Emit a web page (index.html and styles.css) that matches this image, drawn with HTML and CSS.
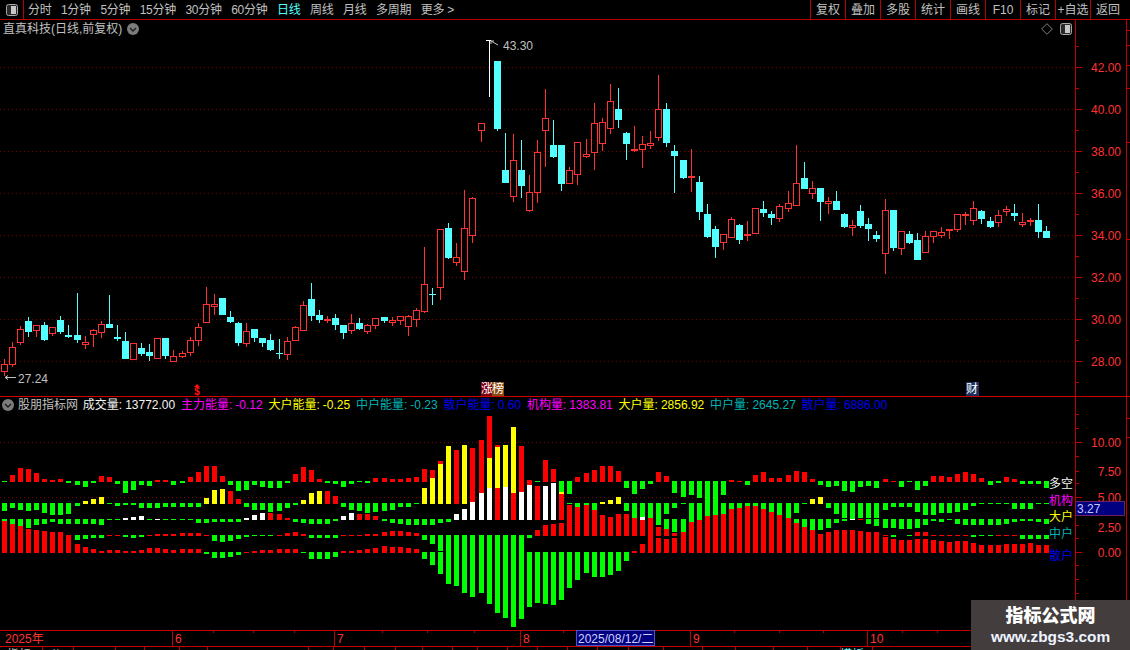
FILE: index.html
```html
<!DOCTYPE html>
<html lang="zh">
<head>
<meta charset="utf-8">
<title>直真科技 日线</title>
<link rel="stylesheet" href="styles.css">
</head>
<body>
<div class="app">
  <header class="toolbar">
    <div class="tb-toggle">
      <svg class="panel-icon" viewBox="0 0 12 12"><rect x=".5" y=".5" width="11" height="11" rx="2" class="pi-box"/><rect x="5" y="2" width="5" height="8" class="pi-bar"/></svg>
    </div>
    <nav class="periods">
      <span>分时</span><span>1分钟</span><span>5分钟</span><span>15分钟</span><span>30分钟</span><span>60分钟</span>
      <span class="active">日线</span><span>周线</span><span>月线</span><span>多周期</span><span>更多 &gt;</span>
    </nav>
    <nav class="tools">
      <span>复权</span><span>叠加</span><span>多股</span><span>统计</span><span>画线</span><span>F10</span><span>标记</span><span>+自选</span><span>返回</span>
    </nav>
  </header>

  <section class="row row-up">
    <div class="pane">
      <svg id="candles" class="chart" viewBox="0 20 1075 376"></svg>
      <div class="pane-title">
        <span>直真科技(日线,前复权)</span>
        <svg class="chev" viewBox="0 0 12 12"><circle cx="6" cy="6" r="6" class="chev-bg"/><path d="M3 5l3 3 3-3" class="chev-line"/></svg>
      </div>
      <div class="pane-icons">
        <svg class="diamond" viewBox="0 0 12 12"><path d="M6 .7L11.3 6 6 11.3.7 6z"/></svg>
        <svg class="panel-icon" viewBox="0 0 12 12"><rect x=".5" y=".5" width="11" height="11" rx="2" class="pi-box"/><rect x="5" y="2" width="5" height="8" class="pi-bar"/></svg>
      </div>
      <span class="flag flag-zt"><i>涨</i><i>榜</i></span>
      <span class="flag flag-cai">财</span>
    </div>
    <svg id="axisUp" class="axis" viewBox="1075 20 51 376"></svg>
    <svg id="stripUp" class="strip" viewBox="1126 20 4 376"></svg>
  </section>

  <section class="row row-low">
    <div class="pane">
      <svg id="bars" class="chart" viewBox="0 397 1075 233"></svg>
      <div class="ind-head">
        <svg class="chev" viewBox="0 0 12 12"><circle cx="6" cy="6" r="6" class="chev-bg"/><path d="M3 5l3 3 3-3" class="chev-line"/></svg>
        <span class="ind-name">股朋指标网</span>
        <span class="c-white">成交量:<b>13772.00</b></span>
        <span class="c-mag">主力能量:<b>-0.12</b></span>
        <span class="c-yel">大户能量:<b>-0.25</b></span>
        <span class="c-teal">中户能量:<b>-0.23</b></span>
        <span class="c-blue">散户能量:<b>0.60</b></span>
        <span class="c-mag">机构量:<b>1383.81</b></span>
        <span class="c-yel">大户量:<b>2856.92</b></span>
        <span class="c-teal">中户量:<b>2645.27</b></span>
        <span class="c-blue">散户量:<b>6886.00</b></span>
      </div>
      <div class="legend">
        <span class="c-white">多空</span>
        <span class="c-mag">机构</span>
        <span class="c-yel">大户</span>
        <span class="c-teal">中户</span>
        <span class="c-blue">散户</span>
      </div>
    </div>
    <div class="axis-wrap">
      <svg id="axisLow" class="axis" viewBox="1075 397 51 233"></svg>
      <span class="cursor-val">3.27</span>
    </div>
    <svg id="stripLow" class="strip" viewBox="1126 397 4 233"></svg>
  </section>

  <svg id="dates" class="dates" viewBox="0 630 1130 20"></svg>

  <aside class="watermark">
    <strong>指标公式网</strong>
    <span>www.zbgs3.com</span>
  </aside>
</div>
<script src="chart.js"></script>
</body>
</html>
```

FILE: styles.css
```css
* { box-sizing: border-box; }
html, body { margin: 0; padding: 0; background: #000; }
body {
  font: 12px/14px "Liberation Sans", "Noto Sans CJK SC", sans-serif;
  color: #c0c0c0;
}
.app { position: relative; width: 1130px; height: 650px; overflow: hidden; background: #000; display: flex; flex-direction: column; }

.toolbar { flex: 0 0 20px; height: 20px; display: flex; align-items: stretch; border-bottom: 1px solid #b80000; }
.tb-toggle { width: 24px; border-right: 1px solid #b80000; display: flex; align-items: center; justify-content: center; }
.panel-icon { width: 12px; height: 12px; display: block; }
.pi-box { fill: #2a2a2a; stroke: #a8a8a8; }
.pi-bar { fill: #c8c8c8; }
.periods { display: flex; gap: 9.6px; padding: 1px 0 0 4px; align-items: center; letter-spacing: -.3px; }
.periods .active { color: #54ffff; }
.tools { margin-left: auto; width: 320px; display: flex; }
.tools span { flex: 0 0 35px; height: 19px; border-left: 1px solid #b80000; text-align: center; padding-top: 3px; }
.tools span:last-child { flex: 1 1 auto; padding-right: 5px; }

.row { display: flex; border-bottom: 1px solid #d00000; min-height: 0; overflow: hidden; }
.row-up { flex: 0 0 377px; }
.row-low { flex: 0 0 233px; border-bottom: 0; }
.pane { position: relative; width: 1075px; overflow: hidden; }
.chart { display: block; width: 1075px; height: 100%; }
.axis { display: block; width: 51px; height: 100%; }
.axis-wrap { position: relative; width: 51px; }
.strip { display: block; flex: 0 0 4px; width: 4px; }
.row-up .strip { height: 376px; }
.row-low .strip { height: 233px; }

.pane-title { position: absolute; left: 3px; top: 2px; display: flex; align-items: center; gap: 5px; }
.chev { width: 12px; height: 12px; display: block; flex: none; }
.chev-bg { fill: #7c7c7c; }
.chev-line { fill: none; stroke: #1c1c1c; stroke-width: 1.4; }
.pane-icons { position: absolute; right: 3px; top: 3px; display: flex; gap: 7px; align-items: center; }
.diamond { width: 12px; height: 12px; display: block; }
.diamond path { fill: none; stroke: #808080; }

.flag { position: absolute; top: 362px; height: 14px; color: #fff; line-height: 14px; display: flex; }
.flag i { font-style: normal; width: 11px; overflow: hidden; }
.flag-zt { left: 481px; }
.flag-zt i:first-child { background: #7a0010; }
.flag-zt i:last-child { background: #8a4a10; width: 12px; }
.flag-cai { left: 966px; width: 13px; background: #1d2f5e; }

.ind-head { position: absolute; left: 2px; top: 1px; display: flex; align-items: center; gap: 5.8px; white-space: nowrap; }
.ind-head b { font-weight: 400; margin-left: 3px; }
.ind-name { margin-left: -1.8px; margin-right: -1px; }
.c-white { color: #f4f4f4; }
.c-mag { color: #ff00ff; }
.c-yel { color: #ffff00; }
.c-teal { color: #00b4b4; }
.c-blue { color: #0000ee; }

.legend { position: absolute; left: 1049px; top: 80px; width: 26px; display: flex; flex-direction: column; gap: 2.5px; white-space: nowrap; }
.legend span:last-child { margin-top: 6px; }

.cursor-val { position: absolute; left: 1px; top: 104px; width: 49px; height: 15px; line-height: 14px; background: #000080; border: 1px solid #70205a; border-left: 0; color: #c8c8ff; padding-left: 1px; }

.dates { display: block; flex: 0 0 20px; width: 1130px; height: 20px; }

.watermark { position: absolute; left: 971px; top: 600px; width: 159px; height: 50px; background: #433e3d; display: flex; flex-direction: column; align-items: center; color: #fff; padding-top: 4px; font-weight: 700; }
.watermark strong { font-size: 18px; line-height: 24px; }
.watermark span { font-size: 15.4px; line-height: 18px; color: #eef4ff; }

/* chart drawing */
.grid { stroke: #7a0000; stroke-width: 1; stroke-dasharray: 1 3; }
.tick { stroke: #c00000; stroke-width: 1; }
.axis-label { fill: #ff3232; font-size: 12px; text-anchor: end; }
.wick-up { stroke: #ff3232; }
.wick-dn { stroke: #54ffff; }
.wick-top { stroke: #ffffff; }
.body-up { fill: #000; stroke: #ff3232; }
.body-flat { fill: #ff3232; }
.body-dn { fill: #54ffff; }
.marker { fill: #c0c0c0; font-size: 12px; }
.marker-line { stroke: #c0c0c0; fill: none; }
.signal { fill: #ff1010; font-size: 10px; font-weight: 700; text-anchor: middle; }
.signal-arrow { fill: #ff1010; }
.bar-r { fill: #ff0000; }
.bar-g { fill: #00ff00; }
.bar-y { fill: #ffff00; }
.bar-w { fill: #ffffff; }
.date-line { stroke: #c00000; stroke-width: 1; }
.date-label { fill: #ff3232; font-size: 12px; }
.date-box { fill: #000080; stroke: #5050c0; }
.date-cur { fill: #d0d0ff; font-size: 12px; }
.tab-text { fill: #c0c0c0; font-size: 12px; }
.tab-text-on { fill: #54ffff; font-size: 12px; }
```

FILE: chart.js
```js
var NS = 'http://www.w3.org/2000/svg';
function el(parent, tag, cls, attrs, text) {
  var n = document.createElementNS(NS, tag);
  if (cls) n.setAttribute('class', cls);
  for (var k in attrs) n.setAttribute(k, attrs[k]);
  if (text != null) n.textContent = text;
  parent.appendChild(n);
  return n;
}
function line(p, cls, x1, y1, x2, y2) { return el(p, 'line', cls, { x1: x1, y1: y1, x2: x2, y2: y2 }); }
function colX(i) { return Math.floor(4.3 + 8.08 * i); }

/* hi, bodyTop, bodyBottom, lo, 1=up 0=down 2=bare wick */
var K = [
[359,364,372,376,1],[342,347,365,367,1],[326,329,343,345,1],[317,321,332,337,0],[325,325,331,337,1],
[322,325,340,341,0],[327,327,334,336,1],[316,320,332,334,0],[325,335,337,338,0],[293,335,340,343,0],
[336,342,345,349,1],[329,330,335,347,1],[321,324,333,338,1],[295,324,328,328,0],[325,337,339,341,0],
[332,341,359,359,0],[343,343,360,360,1],[343,348,354,356,0],[344,352,356,361,0],[338,338,359,359,1],
[338,338,356,359,0],[350,356,362,362,1],[351,353,357,358,1],[337,340,353,356,1],[323,327,341,346,1],
[287,304,323,323,1],[294,304,307,315,1],[298,298,315,315,0],[311,317,322,323,0],[322,323,343,346,0],
[323,331,344,347,1],[329,329,338,342,0],[338,338,343,347,0],[334,340,350,351,0],[339,353,354,359,0],
[337,341,355,360,1],[326,327,341,341,1],[301,305,331,331,1],[283,299,316,321,0],[310,315,320,323,0],
[316,319,321,323,1],[314,318,325,330,0],[325,325,333,339,0],[314,323,331,334,1],[318,323,329,330,0],
[324,325,332,334,1],[318,318,326,329,1],[317,317,321,323,0],[317,320,323,326,1],[316,316,321,325,1],
[315,316,327,336,1],[308,310,320,327,1],[247,284,312,313,1],[288,294,295,305,0],[229,229,288,300,1],
[223,228,258,259,0],[243,257,263,266,1],[190,228,272,280,1],[197,198,236,243,1],[123,123,131,142,1],
[40,40,97,97,2],[61,61,129,131,0],[133,170,183,183,0],[134,160,197,202,1],[140,170,186,198,0],
[175,192,211,212,1],[140,152,193,203,1],[89,118,131,167,1],[120,145,157,158,0],[145,145,184,191,0],
[167,170,184,184,1],[142,142,175,185,1],[139,154,157,158,1],[103,123,153,170,1],[118,122,144,151,1],
[84,101,129,134,1],[88,109,120,128,0],[132,133,144,160,0],[126,149,151,152,1],[136,144,150,168,1],
[131,143,146,149,1],[75,109,138,141,1],[103,109,143,147,0],[145,151,156,193,0],[160,160,178,179,0],
[149,176,178,192,1],[176,182,212,220,0],[204,214,237,238,0],[226,229,247,258,0],[234,234,243,250,1],
[217,219,238,238,1],[224,225,240,244,0],[221,234,236,241,1],[208,208,234,234,1],[201,209,213,217,0],
[211,214,218,225,0],[204,206,219,222,1],[191,203,209,212,1],[145,183,206,206,1],[162,178,189,189,0],
[181,188,194,199,1],[188,188,202,221,0],[197,201,204,214,1],[191,201,210,210,0],[213,214,227,228,0],
[220,225,228,236,1],[205,211,226,228,0],[218,224,229,241,0],[231,235,239,242,0],[199,210,254,274,1],
[210,210,248,251,0],[231,231,249,255,1],[231,234,243,244,0],[233,240,260,260,0],[231,236,253,253,1],
[231,231,237,243,1],[227,232,236,238,1],[229,229,231,239,1],[214,214,230,232,1],[212,214,216,225,1],
[201,208,221,225,1],[210,211,219,224,0],[217,221,227,228,0],[210,215,223,227,1],[206,209,212,216,1],
[204,213,216,221,0],[213,222,225,227,1],[218,220,222,226,1],[204,220,232,238,0],[226,231,238,238,0]
];

var up = document.getElementById('candles');
[67,109,151,193,235,277,319,361].forEach(function (y) { line(up, 'grid', 0, y + .5, 1075, y + .5); });
K.forEach(function (k, i) {
  var x = colX(i), cx = x + .5, kind = k[4];
  if (kind === 2) { line(up, 'wick-top', cx, k[0], cx, k[3]); return; }
  var w = kind ? 'wick-up' : 'wick-dn';
  if (k[1] > k[0]) line(up, w, cx, k[0], cx, k[1]);
  if (k[3] > k[2]) line(up, w, cx, k[2], cx, k[3]);
  if (kind === 0) el(up, 'rect', 'body-dn', { x: x - 3, y: k[1], width: 7, height: k[2] - k[1] });
  else if (k[2] - k[1] <= 2) el(up, 'rect', 'body-flat', { x: x - 3, y: k[1], width: 7, height: 2 });
  else el(up, 'rect', 'body-up', { x: x - 2.5, y: k[1] + .5, width: 6, height: k[2] - k[1] - 1 });
});
/* high / low price markers */
line(up, 'wick-top', 486, 40.5, 491, 40.5);
el(up, 'path', 'marker-line', { d: 'M491 41l7 4M491 41l3 0M491 41l0 3' });
el(up, 'text', 'marker', { x: 503, y: 50 }, '43.30');
el(up, 'path', 'marker-line', { d: 'M5 377.5h11M5 377.5l3-2M5 377.5l3 2' });
el(up, 'text', 'marker', { x: 18, y: 383 }, '27.24');
/* signal */
el(up, 'path', 'signal-arrow', { d: 'M197 384l-3 3h6z' });
el(up, 'text', 'signal', { x: 197, y: 395 }, '$');

var axU = document.getElementById('axisUp');
[[67,'42.00'],[109,'40.00'],[151,'38.00'],[193,'36.00'],[235,'34.00'],[277,'32.00'],[319,'30.00'],[361,'28.00']].forEach(function (t) {
  line(axU, 'tick', 1075, t[0] + .5, 1082, t[0] + .5);
  line(axU, 'tick', 1075, t[0] + 21.5, 1079, t[0] + 21.5);
  el(axU, 'text', 'axis-label', { x: 1121, y: t[0] + 5 }, t[1]);
});
line(axU, 'tick', 1075.5, 20, 1075.5, 396);
line(axU, 'tick', 1075, 46.5, 1079, 46.5);
var stU = document.getElementById('stripUp');
line(stU, 'tick', 1126.5, 20, 1126.5, 396);
[30,45,65,88,142,239].forEach(function (y) { line(stU, 'tick', 1127, y + .5, 1130, y + .5); });

/* indicator pane: five stacked bands, painted in this order */
var A = [-1,7,14,13,9,3,2,3,-2,-4,-6,-2,6,5,-3,-12,-9,-4,-5,2,2,-4,-2,5,10,16,16,6,-4,-10,-9,-4,-6,-7,-7,-2,8,15,12,3,-2,-3,-6,-3,-1,-2,4,4,3,3,4,5,13,12,21,0,0,0,0,0,66,37,0,0,0,2,-1,22,13,-11,-13,5,9,12,16,16,11,-7,-13,-8,-3,10,6,-12,-16,-14,-17,-35,-34,-14,2,1,-4,7,10,4,4,7,11,10,3,-4,-6,-5,-10,-11,-6,-5,-7,3,1,-6,-1,-9,-5,6,6,5,8,10,8,4,-4,-2,5,3,-3,-3,-3,-7];
var B = [-8,-5,-7,-8,-7,-10,-12,-12,-11,-3,3,5,7,-1,-3,-2,-2,-5,-5,-5,-4,-4,-4,-4,-4,6,14,15,13,5,-4,-7,-7,-9,-8,-5,-2,4,11,13,13,8,-4,-7,-8,-10,-9,-8,-7,-4,-4,-1,16,26,40,58,54,59,56,64,46,57,59,77,58,24,0,0,0,12,-1,-4,-2,-7,2,4,7,-8,-15,-14,-15,-16,-11,-5,-1,-19,-17,0,0,-11,-6,-5,-3,-3,-6,-9,-12,-15,-10,-1,5,7,-5,-11,-15,-16,-15,-15,-15,-7,-4,-4,-4,-9,-12,-12,-10,-10,-9,-7,-3,-1,-1,-1,-1,-6,-6,-6,-1,-1];
var C = [-2,-5,-7,-9,-6,-5,-3,-5,-5,-5,-5,-5,-6,-1,-1,2,3,4,-1,1,-1,-1,-1,-1,-4,-4,-3,-3,-3,-3,2,5,7,7,6,2,-3,-4,-5,-5,-5,-2,4,7,6,6,4,-2,-4,-5,-6,-6,-6,-6,-4,-3,6,11,18,27,32,32,33,27,28,35,34,34,37,26,0,0,0,0,0,0,0,0,0,3,2,-6,-10,-13,-13,0,0,0,0,0,0,0,0,0,0,0,0,0,-4,-9,-11,-11,-9,-4,-2,1,1,-5,-7,-9,-9,-10,-10,-9,-6,-2,-3,-1,-5,-6,-6,-6,-6,-6,-5,-3,-2,-2,-3,-5];
var D = [0,0,0,0,0,0,0,0,0,-5,-4,-3,-3,1,1,-2,-3,-2,1,2,2,2,3,3,3,1,-6,-7,-6,-4,-2,-1,-1,-1,1,3,4,2,-3,-3,-3,-3,1,1,1,2,2,4,5,5,4,3,-5,-9,-16,-17,-17,-17,-17,-17,-17,-17,-17,-17,-17,-3,6,11,12,13,31,29,31,26,21,19,22,22,18,16,0,9,7,3,0,0,0,0,0,0,0,0,0,0,0,0,0,0,0,0,0,0,0,0,0,0,0,0,0,1,-2,0,-1,4,4,1,1,1,1,1,-2,-1,-1,1,1,1,-4,-4,-4,-4];
var E = [32,29,27,24,23,22,21,21,18,9,6,4,2,3,3,2,2,3,5,5,4,3,4,4,4,-2,-6,-6,-5,-3,1,2,3,3,4,4,4,-1,-7,-7,-7,-5,2,2,3,4,5,7,6,6,5,4,-7,-13,-22,-32,-34,-41,-45,-41,-52,-61,-66,-75,-67,-55,-51,-52,-53,-48,-36,-28,-21,-25,-25,-23,-19,-9,2,9,33,15,14,15,21,31,33,37,38,39,44,45,47,47,44,41,38,35,30,26,23,19,21,23,23,23,22,21,21,16,14,13,13,14,14,13,12,11,12,12,10,8,8,8,9,9,9,10,8,8];
var B_RED = [28,29,40,41,56,58,59,64,65];
var C_RED = [33,34,35,44,45,46,61,63,66,69,80,106];

var low = document.getElementById('bars');
[442,497].forEach(function (y) { line(low, 'grid', 0, y + .5, 1075, y + .5); });
function bar(i, base, v, upCls) {
  if (!v) return;
  var y = v > 0 ? base + 1 - v : base, h = Math.abs(v);
  el(low, 'rect', v > 0 ? upCls : 'bar-g', { x: colX(i) - 2, y: y, width: 5, height: h });
}
K.forEach(function (k, i) {
  bar(i, 481, A[i], 'bar-r');
  bar(i, 503, B[i], B_RED.indexOf(i) >= 0 ? 'bar-r' : 'bar-y');
  bar(i, 519, C[i], C_RED.indexOf(i) >= 0 ? 'bar-r' : 'bar-w');
  bar(i, 535, D[i], 'bar-r');
  bar(i, 552, E[i], 'bar-r');
});

var axL = document.getElementById('axisLow');
line(axL, 'tick', 1075.5, 397, 1075.5, 630);
[[442,442,'10.00',1082],[471,471,'7.50',1079],[497,497,'5.00',1082],[525,527,'2.50',1079],[552,552,'0.00',1082]].forEach(function (t) {
  line(axL, 'tick', 1075, t[0] + .5, t[3], t[0] + .5);
  el(axL, 'text', 'axis-label', { x: 1121, y: t[1] + 5 }, t[2]);
});
[414,428,456,483,510,538,565,579,593,607,621].forEach(function (y) { line(axL, 'tick', 1075, y + .5, 1079, y + .5); });
var stL = document.getElementById('stripLow');
line(stL, 'tick', 1126.5, 397, 1126.5, 630);
[418,437].forEach(function (y) { line(stL, 'tick', 1127, y + .5, 1130, y + .5); });

/* date axis and cut-off tab row */
var dt = document.getElementById('dates');
line(dt, 'date-line', 0, 630.5, 1126, 630.5);
line(dt, 'date-line', 0, 646.5, 1130, 646.5);
[[172,'6'],[334,'7'],[520,'8'],[690,'9'],[867,'10']].forEach(function (d) {
  line(dt, 'date-line', d[0] + .5, 631, d[0] + .5, 646);
  el(dt, 'text', 'date-label', { x: d[0] + 3, y: 643 }, d[1]);
});
el(dt, 'text', 'date-label', { x: 5, y: 643 }, '2025年');
[213,253,294,382,427,474,563,734,779,823,902,937].forEach(function (x) { line(dt, 'date-line', x + .5, 631, x + .5, 633); });
el(dt, 'rect', 'date-box', { x: 576.5, y: 630.5, width: 78, height: 15 });
el(dt, 'text', 'date-cur', { x: 578, y: 643 }, '2025/08/12/二');
[42,73,115,144,179,207,308,333,364,395,422,452,477,507,537,567,597,628,663,702,735,773,807,840,872].forEach(function (x) {
  line(dt, 'date-line', x + .5, 647, x + .5, 650);
});
el(dt, 'text', 'tab-text', { x: 7, y: 659 }, '指标');
el(dt, 'text', 'tab-text', { x: 50, y: 659 }, '公');
el(dt, 'text', 'tab-text-on', { x: 840, y: 659 }, '模板');
```
